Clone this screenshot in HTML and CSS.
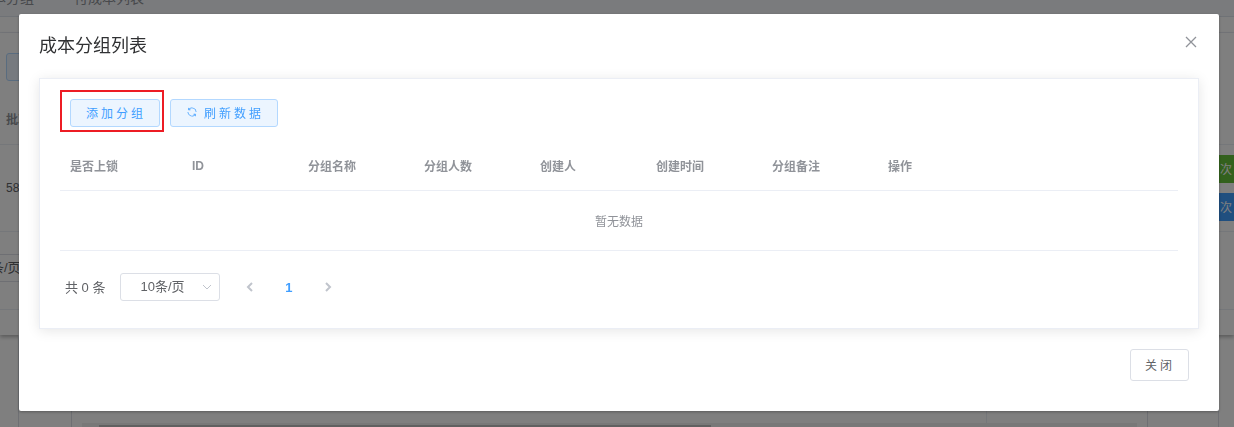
FILE: index.html
```html
<!DOCTYPE html>
<html lang="zh-CN">
<head>
    <meta charset="UTF-8">
    <meta name="viewport" content="width=device-width, initial-scale=1.0">
    <title>成本分组列表</title>
    <link rel="stylesheet" href="styles.css">
</head>
<body>
    <!-- Page behind the dialog -->
    <div class="page">
        <nav class="tabs">
            <a href="#">成本分组</a>
            <a href="#">付成本列表</a>
        </nav>
        <div class="toolbar-line"></div>
        <section class="panel">
            <div class="panel-tools">
                <button type="button" class="btn btn-plain" aria-label="批次"></button>
            </div>
            <div class="panel-head">批次</div>
            <div class="panel-row">
                <span>58</span>
                <div class="panel-actions">
                    <button type="button" class="tag tag-green">次</button>
                    <button type="button" class="tag tag-blue">次</button>
                </div>
            </div>
            <div class="panel-pager">
                <span class="panel-size">条/页</span>
            </div>
            <div class="panel-end"></div>
        </section>
        <section class="lower">
            <div class="lower-inner">
                <div class="lower-main"></div>
                <div class="lower-scroll"><div class="lower-thumb"></div></div>
            </div>
        </section>
    </div>

    <div class="overlay">
        <div class="dialog" role="dialog" aria-labelledby="dialog-title">
            <header class="dialog-header">
                <h1 id="dialog-title">成本分组列表</h1>
                <button type="button" class="dialog-close" aria-label="关闭">
                    <svg viewBox="0 0 12 12" width="12" height="12"><path d="M1 1l10 10M11 1L1 11" /></svg>
                </button>
            </header>

            <div class="card">
                <div class="actions">
                    <div class="marked">
                        <button type="button" class="btn btn-plain">添加分组</button>
                    </div>
                    <button type="button" class="btn btn-plain">
                        <svg viewBox="0 0 1024 1024" width="12" height="12"><path d="M771.776 794.88A384 384 0 0 1 128 512h64a320 320 0 0 0 555.712 216.448H654.72a32 32 0 1 1 0-64h149.056a32 32 0 0 1 32 32v148.928a32 32 0 1 1-64 0v-50.56zM276.288 295.616h92.992a32 32 0 0 1 0 64H220.16a32 32 0 0 1-32-32V178.56a32 32 0 0 1 64 0v50.56A384 384 0 0 1 896.128 512h-64a320 320 0 0 0-555.776-216.384z" /></svg>
                        刷新数据
                    </button>
                </div>

                <table class="table">
                    <thead>
                        <tr>
                            <th class="col-lock">是否上锁</th>
                            <th class="col">ID</th>
                            <th class="col">分组名称</th>
                            <th class="col">分组人数</th>
                            <th class="col">创建人</th>
                            <th class="col">创建时间</th>
                            <th class="col">分组备注</th>
                            <th>操作</th>
                        </tr>
                    </thead>
                    <tbody>
                        <tr>
                            <td colspan="8">暂无数据</td>
                        </tr>
                    </tbody>
                </table>

                <div class="pagination">
                    <span>共 0 条</span>
                    <div class="size">
                        <select aria-label="每页条数">
                            <option>10条/页</option>
                        </select>
                        <svg viewBox="0 0 10 10" width="10" height="10"><path d="M1 3l4 4 4-4" /></svg>
                    </div>
                    <button type="button" class="pager" aria-label="上一页" disabled>
                        <svg viewBox="0 0 10 10" width="10" height="10"><path d="M7 1L3 5l4 4" /></svg>
                    </button>
                    <button type="button" class="pager current">1</button>
                    <button type="button" class="pager" aria-label="下一页" disabled>
                        <svg viewBox="0 0 10 10" width="10" height="10"><path d="M3 1l4 4-4 4" /></svg>
                    </button>
                </div>
            </div>

            <footer class="dialog-footer">
                <button type="button" class="btn btn-close">关闭</button>
            </footer>
        </div>
    </div>
</body>
</html>
```

FILE: styles.css
```css
* {
    box-sizing: border-box;
}
body {
    margin: 0;
    font-family: "Liberation Sans", "Noto Sans CJK SC", sans-serif;
    font-size: 12px;
    color: #606266;
    background-color: #fff;
    overflow: hidden;
}
button, select {
    font-family: inherit;
    font-size: 12px;
    margin: 0;
    cursor: pointer;
}

/* Page behind the dialog */
.page {
    height: 100vh;
    overflow: hidden;
}
.tabs {
    display: flex;
    gap: 40px;
    height: 17px;
    background-color: #f5f7fa;
    border-bottom: 1px solid #dfe4ed;
}
.tabs a {
    margin-top: -12px;
    color: #909399;
    font-size: 14px;
    line-height: 20px;
    text-decoration: none;
    white-space: nowrap;
}
.tabs a:first-child {
    margin-left: -22px;
}
.toolbar-line {
    height: 16px;
    border-bottom: 1px solid #ebeef5;
}
.panel {
    box-shadow: 0 2px 4px rgba(0, 0, 0, 0.3);
}
.panel-tools {
    padding: 20px 6px 0;
    height: 62px;
}
.panel-tools .btn {
    width: 90px;
}
.panel-head {
    height: 50px;
    padding: 0 6px;
    line-height: 50px;
    font-weight: bold;
    color: #909399;
    border-bottom: 1px solid #ebeef5;
}
.panel-row {
    display: flex;
    align-items: center;
    justify-content: space-between;
    height: 87px;
    padding-left: 6px;
    border-bottom: 1px solid #ebeef5;
}
.panel-actions {
    display: flex;
    flex-direction: column;
    gap: 10px;
}
.tag {
    width: 30px;
    height: 28px;
    padding: 0 0 2px 16px;
    border: none;
    color: #fff;
    text-align: left;
}
.tag-green {
    background-color: #67c23a;
}
.tag-blue {
    background-color: #409eff;
}
.panel-pager {
    height: 78px;
    padding-top: 22px;
    border-bottom: 1px solid #ebeef5;
}
.panel-size {
    display: block;
    width: 80px;
    height: 28px;
    margin-left: -10px;
    font-size: 13px;
    line-height: 26px;
    border: 1px solid #dcdfe6;
}
.panel-end {
    height: 25px;
}
.lower {
    height: 92px;
    margin: 0 15px 0 18px;
    padding: 0 70px 0 52px;
    border: solid #dcdfe6;
    border-width: 0 1px;
}
.lower-inner {
    height: 92px;
    padding: 0 10px;
    border: solid #dcdfe6;
    border-width: 0 1px;
}
.lower-main {
    height: 88px;
    margin-right: 150px;
    border-right: 1px solid #ebeef5;
}
.lower-scroll {
    height: 4px;
    padding: 2px 0 0 17px;
    background-color: #f1f1f1;
}
.lower-thumb {
    width: 59%;
    height: 2px;
    background-color: #c1c1c1;
}

/* Dialog */
.overlay {
    position: fixed;
    inset: 0;
    padding: 14px 15px 0 19px;
    background-color: rgba(0, 0, 0, 0.5);
}
.dialog {
    padding: 20px 20px 30px;
    background-color: #fff;
    border-radius: 2px;
    box-shadow: 0 1px 3px rgba(0, 0, 0, 0.3);
}
.dialog-header {
    display: flex;
    align-items: flex-start;
    justify-content: space-between;
    margin-bottom: 20px;
}
.dialog-header h1 {
    margin: 0;
    font-size: 18px;
    line-height: 24px;
    font-weight: normal;
    color: #303133;
}
.dialog-close {
    display: flex;
    padding: 2px;
    border: none;
    background: none;
}
.dialog-close svg, .size svg, .pager svg {
    fill: none;
    stroke: #909399;
}
.dialog-close svg {
    stroke-width: 1.3;
}
.card {
    padding: 20px;
    border: 1px solid #ebeef5;
    box-shadow: 0 2px 12px rgba(0, 0, 0, 0.1);
}
.actions {
    display: flex;
    gap: 10px;
    padding: 0 10px;
}
.marked {
    position: relative;
}
.marked::after {
    content: "";
    position: absolute;
    inset: -9px -4px -5px -10px;
    border: 2px solid #ed1c24;
    pointer-events: none;
}
.btn {
    display: flex;
    align-items: center;
    height: 28px;
    padding: 0 13px 2px 15px;
    border-radius: 3px;
    letter-spacing: 3px;
}
.btn svg {
    margin-right: 6px;
    fill: currentColor;
}
.btn-plain {
    color: #409eff;
    background-color: #ecf5ff;
    border: 1px solid #b3d8ff;
}
.btn-close {
    height: 32px;
    padding-left: 14px;
    color: #606266;
    background-color: #fff;
    border: 1px solid #dcdfe6;
}
.table {
    width: 100%;
    margin-top: 14px;
    border-collapse: separate;
    border-spacing: 0;
    table-layout: fixed;
}
.table th, .table td {
    padding: 0 10px;
    border-bottom: 1px solid #ebeef5;
}
.table th {
    height: 50px;
    text-align: left;
    color: #909399;
}
.table td {
    height: 60px;
    text-align: center;
    color: #909399;
}
.col-lock {
    width: 122px;
}
.col {
    width: 116px;
}
.pagination {
    display: flex;
    align-items: center;
    margin-top: 22px;
    padding: 0 5px 7px;
}
.pagination > span {
    margin-right: 15px;
    padding-bottom: 2px;
    font-size: 13px;
}
.size {
    position: relative;
    margin-right: 10px;
}
.size select {
    appearance: none;
    display: block;
    width: 100px;
    height: 28px;
    padding: 0 25px 2px 19px;
    font-size: 13px;
    color: #606266;
    background-color: #fff;
    border: 1px solid #dcdfe6;
    border-radius: 3px;
}
.size svg {
    position: absolute;
    top: 9px;
    right: 8px;
    stroke: #c0c4cc;
    pointer-events: none;
}
.pager {
    display: flex;
    align-items: center;
    justify-content: center;
    width: 39px;
    height: 28px;
    padding: 0;
    font-size: 13px;
    border: none;
    background: none;
}
.pager svg {
    stroke: #c0c4cc;
    stroke-width: 2;
}
.current {
    color: #409eff;
    font-weight: bold;
}
.dialog-footer {
    display: flex;
    justify-content: flex-end;
    padding: 20px 10px 0;
}
```
